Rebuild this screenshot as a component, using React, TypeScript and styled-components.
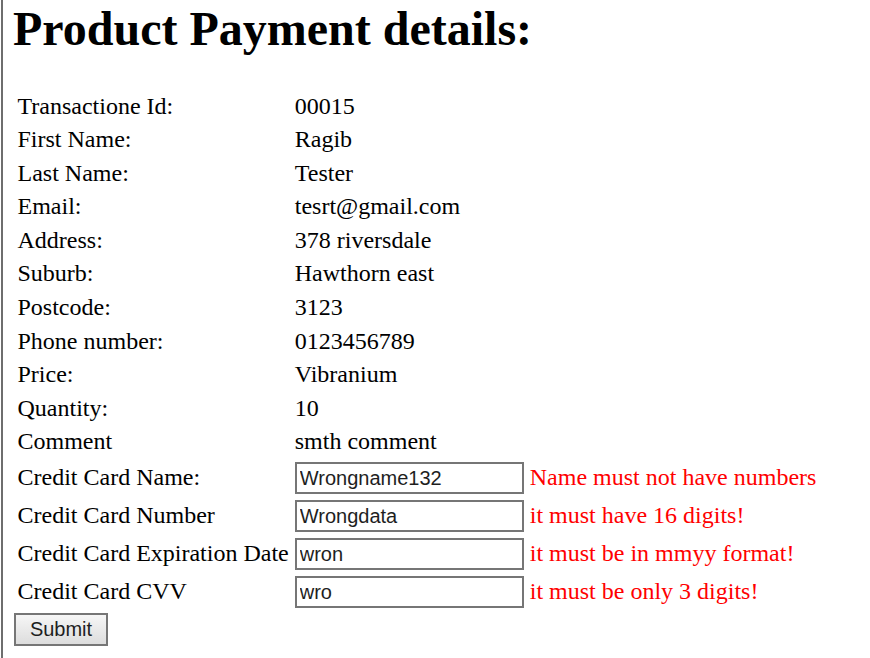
import styled, { createGlobalStyle } from 'styled-components';

interface DetailRow {
  label: string;
  value: string;
}

interface CardField {
  label: string;
  value: string;
  error: string;
}

const details: DetailRow[] = [
  { label: 'Transactione Id:', value: '00015' },
  { label: 'First Name:', value: 'Ragib' },
  { label: 'Last Name:', value: 'Tester' },
  { label: 'Email:', value: 'tesrt@gmail.com' },
  { label: 'Address:', value: '378 riversdale' },
  { label: 'Suburb:', value: 'Hawthorn east' },
  { label: 'Postcode:', value: '3123' },
  { label: 'Phone number:', value: '0123456789' },
  { label: 'Price:', value: 'Vibranium' },
  { label: 'Quantity:', value: '10' },
  { label: 'Comment', value: 'smth comment' },
];

const cardFields: CardField[] = [
  { label: 'Credit Card Name:', value: 'Wrongname132', error: 'Name must not have numbers' },
  { label: 'Credit Card Number', value: 'Wrongdata', error: 'it must have 16 digits!' },
  { label: 'Credit Card Expiration Date', value: 'wron', error: 'it must be in mmyy format!' },
  { label: 'Credit Card CVV', value: 'wro', error: 'it must be only 3 digits!' },
];

function App() {
  return (
    <>
      <GlobalStyle />
      <Page>
        <Title>Product Payment details:</Title>
        <form onSubmit={(e) => e.preventDefault()}>
          <DetailsTable>
            <tbody>
              {details.map(({ label, value }) => (
                <tr key={label}>
                  <Cell>{label}</Cell>
                  <Cell>{value}</Cell>
                </tr>
              ))}
              {cardFields.map(({ label, value, error }) => (
                <InputRow key={label}>
                  <Cell>{label}</Cell>
                  <Cell>
                    <CardInput type="text" defaultValue={value} />
                    <ErrorText> {error}</ErrorText>
                  </Cell>
                </InputRow>
              ))}
            </tbody>
          </DetailsTable>
          <SubmitButton type="submit">Submit</SubmitButton>
        </form>
      </Page>
    </>
  );
}

const GlobalStyle = createGlobalStyle`
  html, body {
    margin: 0;
    padding: 0;
    background: #fff;
  }

  body {
    font-family: "Liberation Serif", "Times New Roman", serif;
    font-size: 24px;
    color: #000;
  }
`;

const Page = styled.div`
  min-height: 100vh;
  box-sizing: border-box;
  margin-left: 1px;
  padding: 1px 0 0 10px;
  border-left: 2px solid #6e6e6e;
`;

const Title = styled.h1`
  margin: 0 0 32px;
  font-size: 48px;
  font-weight: 700;
  line-height: normal;
`;

const DetailsTable = styled.table`
  border-collapse: separate;
  border-spacing: 3px;
`;

const Cell = styled.td`
  height: 30.6px;
  box-sizing: border-box;
  padding: 1.5px;
  line-height: 27.6px;
  white-space: nowrap;
  vertical-align: middle;
`;

const InputRow = styled.tr`
  height: 35px;
`;

const CardInput = styled.input`
  box-sizing: border-box;
  width: 229px;
  height: 32px;
  margin: 0;
  padding: 1px 3px;
  border: 2px solid #767676;
  border-radius: 0;
  font-family: "Liberation Sans", Arial, sans-serif;
  font-size: 20px;
  color: #1e1e1e;
  vertical-align: middle;
`;

const ErrorText = styled.span`
  color: #ff0000;
  vertical-align: middle;
`;

const SubmitButton = styled.button`
  box-sizing: border-box;
  width: 94px;
  height: 33px;
  margin: 0 0 0 1px;
  padding: 0;
  border: 2px solid #767676;
  border-radius: 0;
  background: linear-gradient(#f6f6f6, #dddddd);
  font-family: "Liberation Sans", Arial, sans-serif;
  font-size: 20px;
  color: #1e1e1e;
`;

export default App;
